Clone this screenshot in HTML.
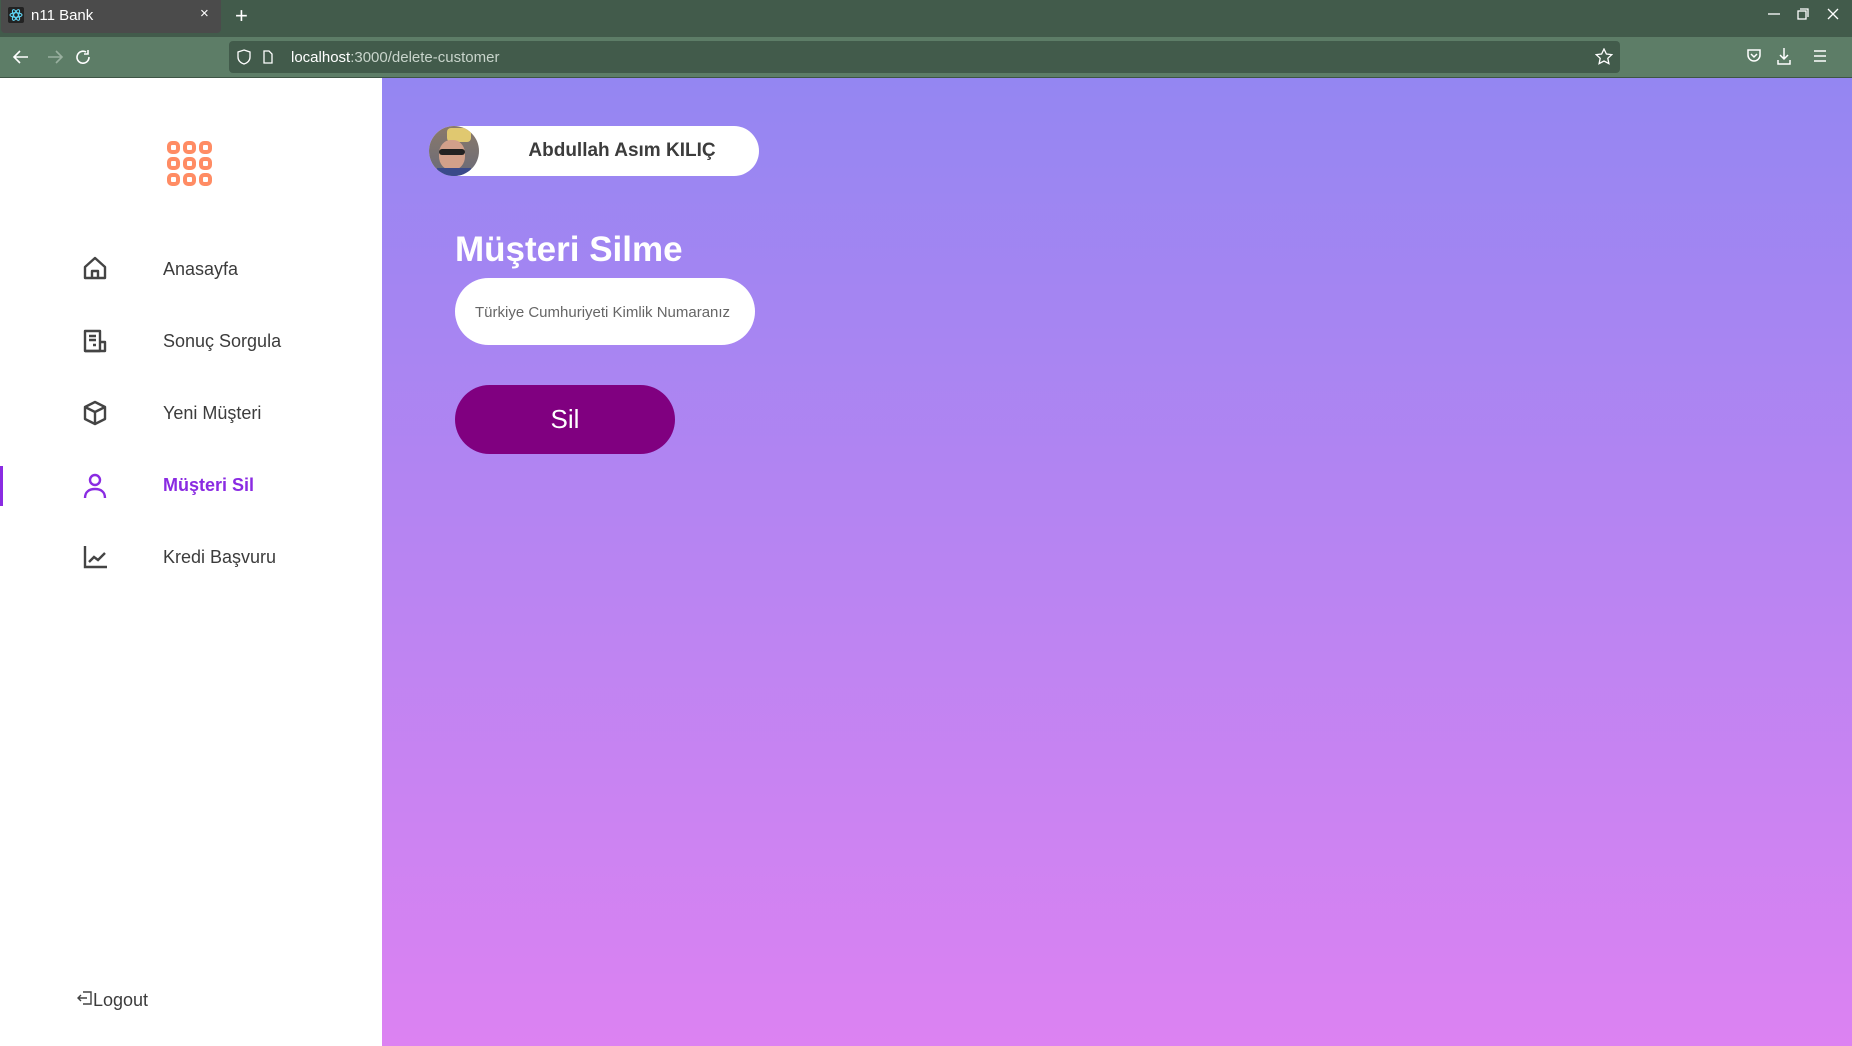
<!DOCTYPE html>
<html><head><meta charset="utf-8"><style>
*{margin:0;padding:0;box-sizing:border-box}
body{width:1852px;height:1046px;overflow:hidden;font-family:"Liberation Sans",sans-serif;position:relative;background:#fff}
.tabbar{position:absolute;left:0;top:0;width:1852px;height:37px;background:#425b4b}
.tab{position:absolute;left:1px;top:0;width:220px;height:33px;background:#4b4b4b;border-radius:0 0 4px 4px;color:#fff;font-size:15px}
.toolbar{position:absolute;left:0;top:37px;width:1852px;height:41px;background:#5d7d67;border-bottom:1px solid #3e5545}
.url{position:absolute;left:229px;top:4px;width:1391px;height:32px;background:#425b4b;border-radius:4px;color:#fff;font-size:15px}
.side{position:absolute;left:0;top:78px;width:382px;height:968px;background:#fff}
.main{position:absolute;left:382px;top:78px;width:1470px;height:968px;background:linear-gradient(#9486f2,#dc82f2)}
.nav{position:absolute;left:163px;font-size:18px;color:#3c3c3c}
.ic{position:absolute;left:82px}
</style></head><body>
<div class="tabbar">
 <div class="tab"><svg style="position:absolute;left:7px;top:7px" width="16" height="16" viewBox="0 0 16 16"><rect width="16" height="16" rx="2" fill="#222"/><ellipse cx="8" cy="8" rx="6" ry="2.3" fill="none" stroke="#61dafb"/><ellipse cx="8" cy="8" rx="6" ry="2.3" fill="none" stroke="#61dafb" transform="rotate(60 8 8)"/><ellipse cx="8" cy="8" rx="6" ry="2.3" fill="none" stroke="#61dafb" transform="rotate(-60 8 8)"/></svg><span style="position:absolute;left:30px;top:7px">n11 Bank</span><span style="position:absolute;left:199px;top:5px;font-size:15px">×</span></div>
 <span style="position:absolute;left:235px;top:3px;color:#fff;font-size:22px">+</span>
 <svg style="position:absolute;left:1760px;top:8px" width="85" height="20" stroke="#fff" fill="none" stroke-width="1.3"><path d="M8 6h12"/><rect x="38" y="3" width="8" height="8"/><path d="M40 1h8v8"/><path d="M68 1l10 10M78 1l-10 10"/></svg>
</div>
<div class="toolbar">
 <svg style="position:absolute;left:12px;top:11px" width="90" height="20" stroke="#fff" fill="none" stroke-width="1.6"><path d="M16 9H3M8 3L2 9l6 6"/><path d="M36 9h13M44 3l6 6-6 6" stroke="#9ab0a0"/><path d="M74 4a6 6 0 1 0 3 5M76 2v4h-4"/></svg>
 <div class="url">
  <svg style="position:absolute;left:8px;top:7px" width="36" height="18" stroke="#fff" fill="none" stroke-width="1.3"><path d="M7 2l6 2v5c0 4-3 6-6 7-3-1-6-3-6-7V4z"/><path d="M27 3h5l3 3v9h-8z"/></svg>
  <span style="position:absolute;left:62px;top:8px">localhost<span style="color:#c8d4cb">:3000/delete-customer</span></span>
  <svg style="position:absolute;left:1366px;top:7px" width="18" height="18" fill="none" stroke="#fff" stroke-width="1.3"><path d="M9 1l2.4 5 5.4.6-4 3.7 1.1 5.3L9 13l-4.9 2.6 1.1-5.3-4-3.7L6.6 6z"/></svg>
 </div>
 <svg style="position:absolute;left:1745px;top:9px" width="100" height="24" stroke="#fff" fill="none" stroke-width="1.5"><path d="M3 4h12v5a6 6 0 0 1-12 0z"/><path d="M6 8l3 3 3-3"/><path d="M39 2v11M35 9l4 4 4-4M33 14v4h12v-4"/><path d="M69 5h12M69 10h12M69 15h12"/></svg>
</div>
<div class="side">
 <svg style="position:absolute;left:166px;top:62px" width="48" height="48" fill="none" stroke="#ff8c64" stroke-width="4"><g><rect x="3" y="3" width="9" height="9" rx="3"/><rect x="19" y="3" width="9" height="9" rx="3"/><rect x="35" y="3" width="9" height="9" rx="3"/><rect x="3" y="19" width="9" height="9" rx="3"/><rect x="19" y="19" width="9" height="9" rx="3"/><rect x="35" y="19" width="9" height="9" rx="3"/><rect x="3" y="35" width="9" height="9" rx="3"/><rect x="19" y="35" width="9" height="9" rx="3"/><rect x="35" y="35" width="9" height="9" rx="3"/></g></svg>
 <svg class="ic" style="top:177px" width="26" height="26" fill="none" stroke="#444" stroke-width="2.4" stroke-linejoin="round"><path d="M3 12L13 3l10 9v11H3z"/><path d="M10 23v-7h6v7"/></svg>
 <div class="nav" style="top:181px">Anasayfa</div>
 <svg class="ic" style="top:250px" width="26" height="26" fill="none" stroke="#444" stroke-width="2.4" stroke-linejoin="round"><path d="M3 3h15v20H3z"/><path d="M18 14h5v9H3"/><path d="M7 8h7M7 12h7M11 17h3"/></svg>
 <div class="nav" style="top:253px">Sonuç Sorgula</div>
 <svg class="ic" style="top:322px" width="26" height="26" fill="none" stroke="#444" stroke-width="2.4" stroke-linejoin="round"><path d="M13 2l10 5v12l-10 5-10-5V7z"/><path d="M3 7l10 5 10-5M13 12v12"/></svg>
 <div class="nav" style="top:325px">Yeni Müşteri</div>
 <div style="position:absolute;left:0;top:388px;width:3px;height:40px;background:#8a2be2"></div>
 <svg class="ic" style="top:395px" width="26" height="26" fill="none" stroke="#8a2be2" stroke-width="2.4"><circle cx="13" cy="7" r="5"/><path d="M3 25c0-6 4-9 10-9s10 3 10 9"/></svg>
 <div class="nav" style="top:397px;color:#8a2be2;font-weight:bold">Müşteri Sil</div>
 <svg class="ic" style="top:466px" width="26" height="26" fill="none" stroke="#444" stroke-width="2.4"><path d="M3 2v21h22"/><path d="M7 18l5-5 4 3 7-7"/></svg>
 <div class="nav" style="top:469px">Kredi Başvuru</div>
 <svg style="position:absolute;left:77px;top:912px" width="16" height="16" fill="none" stroke="#444" stroke-width="1.4"><path d="M6 2h8v12H6M1 8h9M4 5L1 8l3 3"/></svg>
 <div class="nav" style="left:93px;top:912px;font-size:18px">Logout</div>
</div>
<div class="main">
 <div style="position:absolute;left:47px;top:48px;width:330px;height:50px;background:#fff;border-radius:25px"></div>
 <div style="position:absolute;left:47px;top:48px;width:50px;height:50px;border-radius:50%;overflow:hidden;background:linear-gradient(#8a7a6a,#6a6a78)">
  <div style="position:absolute;left:18px;top:2px;width:24px;height:14px;background:#e0c870;border-radius:4px"></div>
  <div style="position:absolute;left:10px;top:14px;width:26px;height:30px;background:#d2a08a;border-radius:45%"></div>
  <div style="position:absolute;left:10px;top:23px;width:26px;height:6px;background:#222;border-radius:3px"></div>
  <div style="position:absolute;left:8px;top:42px;width:34px;height:12px;background:#3a4a8a"></div>
 </div>
 <div style="position:absolute;left:125px;top:62px;width:230px;text-align:center;font-size:19px;font-weight:bold;color:#3c3c3c">Abdullah Asım KILIÇ</div>
 <div style="position:absolute;left:73px;top:152px;font-size:35px;font-weight:bold;color:#fff">Müşteri Silme</div>
 <div style="position:absolute;left:73px;top:200px;width:300px;height:67px;background:#fff;border-radius:34px;font-size:15px;color:#666;padding:26px 0 0 20px">Türkiye Cumhuriyeti Kimlik Numaranız</div>
 <div style="position:absolute;left:73px;top:307px;width:220px;height:69px;background:#800080;border-radius:35px;color:#fff;font-size:26px;text-align:center;line-height:69px">Sil</div>
</div>
</body></html>
